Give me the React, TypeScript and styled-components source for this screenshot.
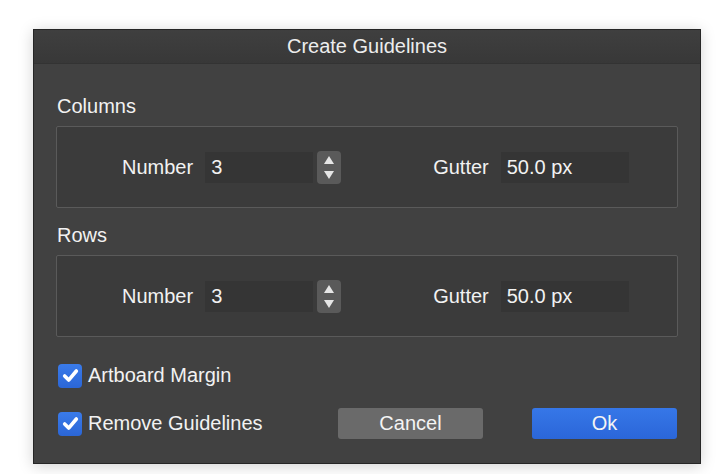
import React from "react";
import styled, { createGlobalStyle } from "styled-components";

const Global = createGlobalStyle`
  html, body { margin: 0; padding: 0; background: #ffffff; }
  body { font-family: "Liberation Sans", Arial, sans-serif; }
  * { box-sizing: border-box; }
`;

const Page = styled.div`
  width: 720px;
  height: 474px;
  padding: 29px 0 0 33px;
`;

const Dialog = styled.div`
  width: 668px;
  height: 435px;
  background: #414141;
  border: 1px solid #262626;
  box-shadow: 0 2px 14px rgba(0, 0, 0, 0.18);
  display: flex;
  flex-direction: column;
  color: #f2f2f2;
  font-size: 20px;
`;

const TitleBar = styled.div`
  height: 34px;
  flex: none;
  display: flex;
  align-items: center;
  justify-content: center;
  background: linear-gradient(#3f3f3f, #383838);
  border-bottom: 1px solid #333;
  font-size: 20px;
  color: #ededed;
`;

const Body = styled.div`
  display: flex;
  flex-direction: column;
  padding: 30px 22px 0 22px;
`;

const SectionLabel = styled.div<{ $top: number }>`
  height: 24px;
  line-height: 24px;
  font-size: 20px;
  margin: ${(p) => p.$top}px 0 8px 1px;
`;

const Group = styled.div`
  height: 82px;
  background: #3b3b3b;
  border: 1px solid #5a5a5a;
  border-radius: 2px;
  display: flex;
  align-items: center;
  padding-left: 65px;
  gap: 92px;
`;

const Field = styled.div`
  display: flex;
  align-items: center;
`;

const FieldLabel = styled.span`
  margin-right: 12px;
  font-size: 20px;
`;

const Input = styled.div<{ $w: number }>`
  width: ${(p) => p.$w}px;
  height: 31px;
  background: #353535;
  display: flex;
  align-items: center;
  padding-left: 6px;
  font-size: 20px;
`;

const Stepper = styled.div`
  width: 24px;
  height: 33px;
  margin-left: 4px;
  background: #5a5a5a;
  border-radius: 4px;
  display: flex;
  flex-direction: column;
  align-items: center;
  justify-content: center;
  gap: 7px;
`;

const Footer = styled.div`
  display: flex;
  flex-direction: column;
  padding: 23px 23px 0 24px;
  gap: 17px;
`;

const Row = styled.div`
  display: flex;
  align-items: center;
  height: 31px;
`;

const Check = styled.label`
  display: flex;
  align-items: center;
  gap: 6px;
  font-size: 20px;
  width: 280px;
`;

const Box = styled.span`
  width: 24px;
  height: 24px;
  border-radius: 4px;
  background: linear-gradient(#3a7bea, #2b66d6);
  display: flex;
  align-items: center;
  justify-content: center;
`;

const Button = styled.div<{ $primary?: boolean }>`
  width: 145px;
  height: 31px;
  border-radius: 3px;
  display: flex;
  align-items: center;
  justify-content: center;
  font-size: 20px;
  color: #f4f4f4;
  background: ${(p) =>
    p.$primary ? "linear-gradient(#3677e8, #2b66d8)" : "#6a6a6a"};
  margin-left: ${(p) => (p.$primary ? 49 : 0)}px;
`;

const Tri = ({ up }: { up?: boolean }) => (
  <svg width="10" height="8" viewBox="0 0 10 8">
    <path d={up ? "M5 0 L10 8 L0 8 Z" : "M0 0 L10 0 L5 8 Z"} fill="#e6e6e6" />
  </svg>
);

const Tick = () => (
  <svg width="17" height="15" viewBox="0 0 16 14">
    <path
      d="M2.5 7.5 L6.3 11.3 L13.5 2.8"
      stroke="#fff"
      strokeWidth="3.4"
      fill="none"
      strokeLinecap="round"
      strokeLinejoin="round"
    />
  </svg>
);

const Section = ({ title, top }: { title: string; top: number }) => (
  <>
    <SectionLabel $top={top}>{title}</SectionLabel>
    <Group>
      <Field>
        <FieldLabel>Number</FieldLabel>
        <Input $w={108}>3</Input>
        <Stepper>
          <Tri up />
          <Tri />
        </Stepper>
      </Field>
      <Field>
        <FieldLabel>Gutter</FieldLabel>
        <Input $w={128}>50.0 px</Input>
      </Field>
    </Group>
  </>
);

export default function App() {
  return (
    <Page>
      <Global />
      <Dialog>
        <TitleBar>Create Guidelines</TitleBar>
        <Body>
          <Section title="Columns" top={0} />
          <Section title="Rows" top={15} />
        </Body>
        <Footer>
          <Row>
            <Check>
              <Box>
                <Tick />
              </Box>
              Artboard Margin
            </Check>
          </Row>
          <Row>
            <Check>
              <Box>
                <Tick />
              </Box>
              Remove Guidelines
            </Check>
            <Button>Cancel</Button>
            <Button $primary>Ok</Button>
          </Row>
        </Footer>
      </Dialog>
    </Page>
  );
}
